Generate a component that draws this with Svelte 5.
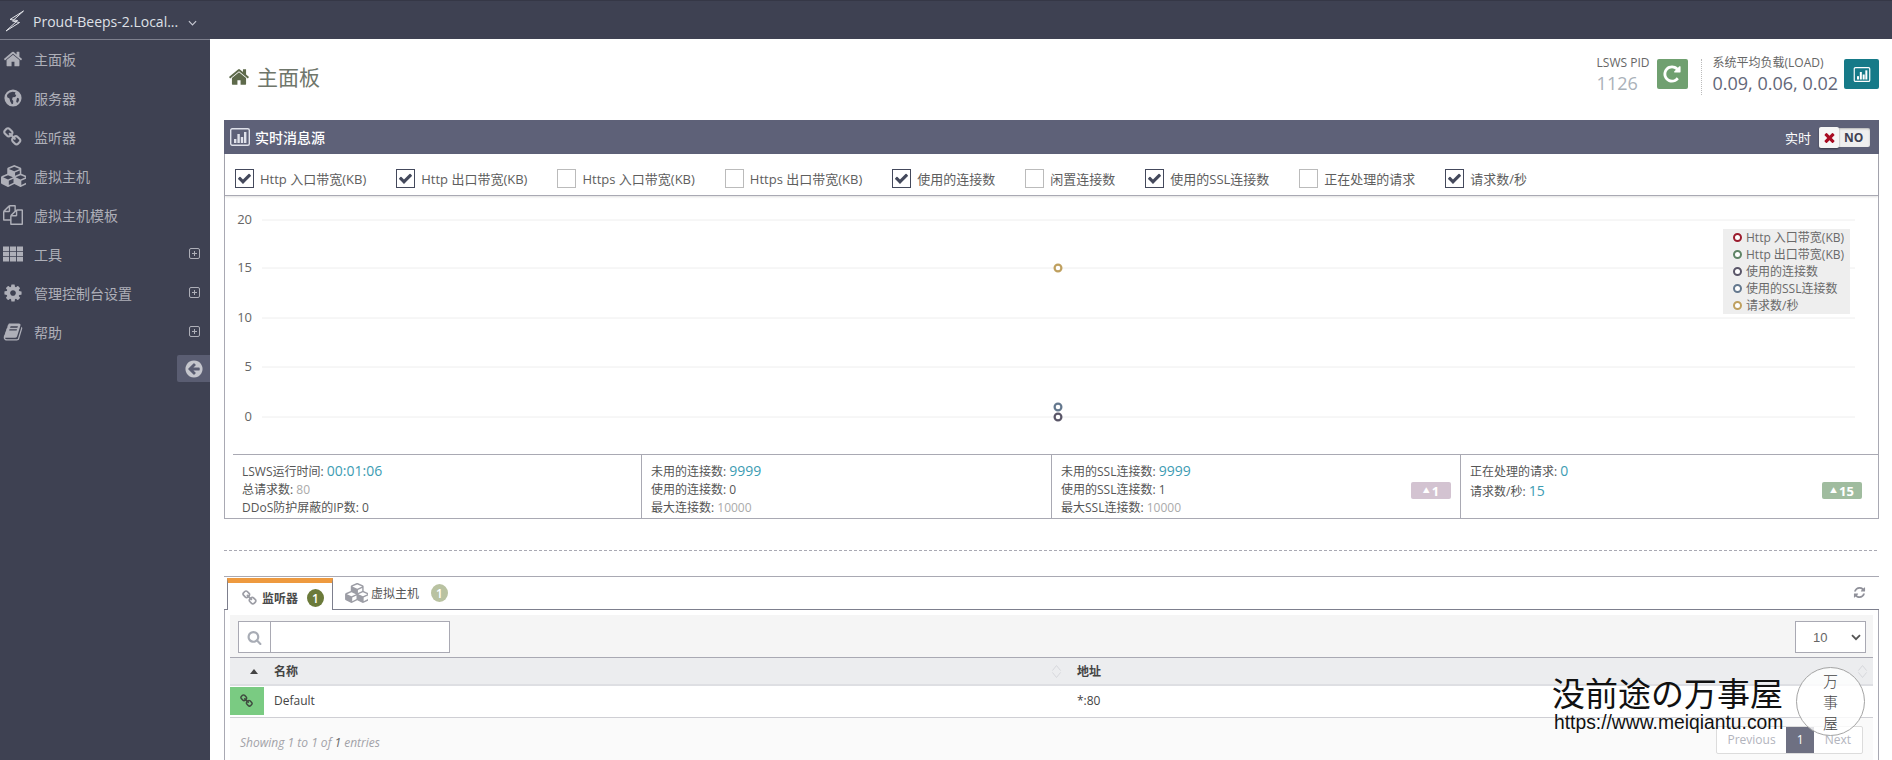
<script>
  const fa = {
    home: 'M1472 992v480q0 26-19 45t-45 19h-384v-384h-256v384h-384q-26 0-45-19t-19-45v-480q0-1 .5-3t.5-3l575-474 575 474q1 2 1 6zm223-69l-62 74q-8 9-21 11h-3q-13 0-21-7l-692-577-692 577q-12 8-24 7-13-2-21-11l-62-74q-8-10-7-23.500t11-21.500l719-599q32-26 76-26t76 26l244 204v-195q0-14 9-23t23-9h192q14 0 23 9t9 23v408l219 182q10 8 11 21.500t-7 23.500z',
    link: 'M1456 1216q0-40-28-68l-208-208q-28-28-68-28-42 0-72 32 3 3 19 18.500t21.500 21.500 15 19 13 25.500 3.500 27.500q0 40-28 68t-68 28q-15 0-27.500-3.500t-25.500-13-19-15-21.500-21.500-18.500-19q-33 31-33 73 0 40 28 68l206 207q27 27 68 27 40 0 68-26l147-146q28-28 28-67zm-703-705q0-40-28-68l-206-207q-28-28-68-28-39 0-68 27l-147 146q-28 28-28 67 0 40 28 68l208 208q27 27 68 27 42 0 72-31-3-3-19-18.500t-21.500-21.500-15-19-13-25.500-3.500-27.500q0-40 28-68t68-28q15 0 27.500 3.500t25.500 13 19 15 21.500 21.500 18.500 19q33-31 33-73zm895 705q0 120-85 203l-147 146q-83 83-203 83-121 0-204-85l-206-207q-83-83-83-203 0-123 88-209l-88-88q-86 88-208 88-120 0-204-84l-208-208q-84-84-84-204t85-203l147-146q83-83 203-83 121 0 204 85l206 207q83 83 83 203 0 123-88 209l88 88q86-88 208-88 120 0 204 84l208 208q84 84 84 204z',
    cog: 'M1152 896q0-106-75-181t-181-75-181 75-75 181 75 181 181 75 181-75 75-181zm512-109v222q0 12-8 23t-20 13l-185 28q-19 54-39 91 35 50 107 138 10 12 10 25t-9 23q-27 37-99 108t-94 71q-12 0-26-9l-138-108q-44 23-91 38-16 136-29 186-7 28-36 28h-222q-14 0-24.500-8.500t-11.500-21.500l-28-184q-49-16-90-37l-141 107q-10 9-25 9-14 0-25-11-126-114-165-168-7-10-7-23 0-12 8-23 15-21 51-66.500t54-70.500q-27-50-41-99l-183-27q-13-2-21-12.500t-8-23.500v-222q0-12 8-23t19-13l186-28q14-46 39-92-40-57-107-138-10-12-10-24 0-10 9-23 26-36 98.500-107.500t94.500-71.500q13 0 26 10l138 107q44-23 91-38 16-136 29-186 7-28 36-28h222q14 0 24.500 8.500t11.500 21.500l28 184q49 16 90 37l142-107q9-9 24-9 13 0 25 10 129 119 165 170 7 8 7 22 0 12-8 23-15 21-51 66.500t-54 70.500q26 50 41 98l183 28q13 2 21 12.500t8 23.500z',
    book: 'M1703 478q40 57 18 129l-275 906q-19 64-76.500 107.500t-122.500 43.500h-923q-77 0-148.500-53.500t-99.500-131.500q-24-67-2-127 0-4 3-27t4-37q1-8-3-21.500t-3-19.500q2-11 8-21t16.500-23.500 16.500-23.500q23-38 45-91.500t30-91.500q3-10 .5-30t-.5-28q3-11 17-28t17-23q21-36 42-92t25-90q1-9-2.500-32t.5-28q4-13 22-30.500t22-22.500q19-26 42.500-84.500t27.500-96.500q1-8-3-25.500t-2-26.500q2-8 9-18t18-23 17-21q8-12 16.500-30.500t15-35 16-36 19.500-32 26.500-23.500 36-11.500 47.500 5.500l-1 3q38-9 51-9h761q74 0 114 56t18 130l-274 906q-36 119-71.500 153.500t-128.500 34.500h-869q-27 0-38 15-11 16-1 43 24 70 144 70h923q29 0 56-15.500t35-41.500l300-987q7-22 5-57 38 15 59 43zm-1064 2q-4 13 2 22.500t20 9.500h608q13 0 25.500-9.500t16.500-22.500l21-64q4-13-2-22.500t-20-9.500h-608q-13 0-25.500 9.500t-16.500 22.500zm-83 256q-4 13 2 22.500t20 9.500h608q13 0 25.500-9.500t16.500-22.500l21-64q4-13-2-22.500t-20-9.500h-608q-13 0-25.500 9.500t-16.500 22.500z',
    files: 'M1696 384q40 0 68 28t28 68v1216q0 40-28 68t-68 28h-960q-40 0-68-28t-28-68v-288h-544q-40 0-68-28t-28-68v-672q0-40 20-88t48-76l408-408q28-28 76-48t88-20h416q40 0 68 28t28 68v328q68-40 128-40h416zm-544 213l-299 299h299v-299zm-640-384l-299 299h299v-299zm196 647l316-316v-416h-384v416q0 40-28 68t-68 28h-416v640h512v-256q0-40 20-88t48-76zm956 804v-1152h-384v416q0 40-28 68t-68 28h-416v640h896z',
    repeat: 'M1664 256v448q0 26-19 45t-45 19h-448q-42 0-59-40-17-39 14-69l138-138q-148-137-349-137-104 0-198.500 40.500t-163.500 109.500-109.500 163.500-40.500 198.500 40.500 198.500 109.500 163.500 163.500 109.500 198.500 40.500q119 0 225-52t179-147q7-10 23-12 15 0 25 9l137 138q9 8 9.500 20.500t-7.500 22.500q-109 132-264 204.500t-327 72.500q-156 0-298-61t-245-164-164-245-61-298 61-298 164-245 245-164 298-61q147 0 284.500 55.500t244.500 156.500l130-129q29-31 70-14 39 17 39 59z',
    back: 'M1408 960v-128q0-26-19-45t-45-19h-502l189-189q19-19 19-45t-19-45l-91-91q-18-18-45-18t-45 18l-362 362-91 91q-18 18-18 45t18 45l91 91 362 362q18 18 45 18t45-18l91-91q18-18 18-45t-18-45l-189-189h502q26 0 45-19t19-45zm256-64q0 209-103 385.500t-279.500 279.500-385.500 103-385.500-103-279.500-279.500-103-385.500 103-385.500 279.500-279.500 385.500-103 385.500 103 279.500 279.500 103 385.500z',
    check: 'M1671 566q0 40-28 68l-724 724-136 136q-28 28-68 28t-68-28l-136-136-362-362q-28-28-28-68t28-68l136-136q28-28 68-28t68 28l294 295 656-657q28-28 68-28t68 28l136 136q28 28 28 68z',
    times: 'M1490 1322q0 40-28 68l-136 136q-28 28-68 28t-68-28l-294-294-294 294q-28 28-68 28t-68-28l-136-136q-28-28-28-68t28-68l294-294-294-294q-28-28-28-68t28-68l136-136q28-28 68-28t68 28l294 294 294-294q28-28 68-28t68 28l136 136q28 28 28 68t-28 68l-294 294 294 294q28 28 28 68z',
    search: 'M1216 832q0-185-131.500-316.500t-316.500-131.500-316.500 131.500-131.500 316.500 131.500 316.500 316.500 131.500 316.500-131.500 131.500-316.500zm512 832q0 52-38 90t-90 38q-54 0-90-38l-343-342q-179 124-399 124-143 0-273.500-55.500t-225-150-150-225-55.500-273.500 55.500-273.500 150-225 225-150 273.500-55.500 273.500 55.500 225 150 150 225 55.500 273.500q0 220-124 399l343 343q37 37 37 90z',
    refresh: 'M1639 1056q0 5-1 7-64 268-268 434.500t-478 166.500q-146 0-282.500-55t-243.500-157l-129 129q-19 19-45 19t-45-19-19-45v-448q0-26 19-45t45-19h448q26 0 45 19t19 45-19 45l-137 137q71 66 161 102t187 36q134 0 250-65t186-179q11-17 53-117 8-23 30-23h192q13 0 22.500 9.500t9.500 22.500zm25-800v448q0 26-19 45t-45 19h-448q-26 0-45-19t-19-45 19-45l138-138q-148-137-349-137-134 0-250 65t-186 179q-11 17-53 117-8 23-30 23h-199q-13 0-22.500-9.500t-9.500-22.500v-7q65-268 270-434.500t480-166.500q146 0 284 55.500t245 156.500l130-129q19-19 45-19t45 19 19 45z',
    th: 'M0 224h544v400h-544zM624 224h544v400h-544zM1248 224h544v400h-544zM0 696h544v400h-544zM624 696h544v400h-544zM1248 696h544v400h-544zM0 1168h544v400h-544zM624 1168h544v400h-544zM1248 1168h544v400h-544z',
    cubes: 'M640 1632l384-192v-314l-384 164v342zm-64-454l404-173-404-173-404 173zm1088 454l384-192v-314l-384 164v342zm-64-454l404-173-404-173-404 173zm-448-293l384-165v-266l-384 164v267zm-64-379l441-189-441-189-441 189zm1088 518v416q0 36-19 67t-52 47l-448 224q-25 14-57 14t-57-14l-448-224q-5-2-7-4-2 2-7 4l-448 224q-25 14-57 14t-57-14l-448-224q-33-16-52-47t-19-67v-416q0-38 21.500-70t56.500-48l434-186v-400q0-38 21.500-70t56.500-48l448-192q23-10 50-10t50 10l448 192q35 16 56.500 48t21.500 70v400l434 186q36 16 57 48t21 70z',
    globe: 'M896 128a768 768 0 1 0 0 1536a768 768 0 1 0 0-1536zM560 420l300-90 260 60-60 170 130 60-90 180-230 30-60 210 110 130-20 240-110 50-150-280-60-240-200-120-20-190zM1260 880l170 50-10 240-150 170-90-120z'
  };

  const menu = [
    { icon: 'home', label: '主面板' },
    { icon: 'globe', label: '服务器' },
    { icon: 'link', label: '监听器' },
    { icon: 'cubes', label: '虚拟主机' },
    { icon: 'files', label: '虚拟主机模板' },
    { icon: 'th', label: '工具', more: true },
    { icon: 'cog', label: '管理控制台设置', more: true },
    { icon: 'book', label: '帮助', more: true }
  ];

  const series = [
    { label: 'Http 入口带宽(KB)', on: true },
    { label: 'Http 出口带宽(KB)', on: true },
    { label: 'Https 入口带宽(KB)', on: false },
    { label: 'Https 出口带宽(KB)', on: false },
    { label: '使用的连接数', on: true },
    { label: '闲置连接数', on: false },
    { label: '使用的SSL连接数', on: true },
    { label: '正在处理的请求', on: false },
    { label: '请求数/秒', on: true }
  ];

  const legend = [
    { label: 'Http 入口带宽(KB)', color: '#9b1c2e' },
    { label: 'Http 出口带宽(KB)', color: '#5f8466' },
    { label: '使用的连接数', color: '#5a5668' },
    { label: '使用的SSL连接数', color: '#64788e' },
    { label: '请求数/秒', color: '#bfa05f' }
  ];

  const ticks = [
    { v: 20, y: 24 },
    { v: 15, y: 72 },
    { v: 10, y: 122 },
    { v: 5, y: 171 },
    { v: 0, y: 221 }
  ];
  const points = [
    { y: 72, color: '#bfa05f' },
    { y: 211, color: '#64788e' },
    { y: 221, color: '#5a5668' }
  ];
</script>

{#snippet icon(name, cls)}
  <svg class={cls} viewBox={name === 'cubes' ? '0 0 2048 1792' : '0 0 1792 1792'} aria-hidden="true"><path d={fa[name]} fill="currentColor" fill-rule="evenodd" /></svg>
{/snippet}

{#snippet bars(cls)}
  <svg class={cls} viewBox="0 0 20 18" aria-hidden="true">
    <rect x="0.7" y="0.7" width="18.6" height="16.6" rx="1.5" fill="none" stroke="currentColor" stroke-width="1.4" />
    <rect x="4" y="11" width="2.4" height="4" fill="currentColor" />
    <rect x="7.4" y="6" width="2.4" height="9" fill="currentColor" />
    <rect x="10.800" y="9" width="2.4" height="6" fill="currentColor" />
    <rect x="14" y="4" width="2.4" height="11" fill="currentColor" />
  </svg>
{/snippet}

{#snippet updown()}
  <svg class="updown" viewBox="0 0 12 16" aria-hidden="true">
    <path d="M1.500 7L6 1.500 10.500 7M1.500 9L6 14.500 10.500 9" fill="none" stroke="#d4d5da" stroke-width="1" />
  </svg>
{/snippet}

<div class="page">
  <header class="topbar">
    <svg class="logo" viewBox="0 0 20 22" aria-hidden="true">
      <path d="M18.500 1L5 9.500 12.500 10.500 1 21 14.500 12.500 7.500 11z" fill="none" stroke="#e4e5ea" stroke-width="1" stroke-linejoin="round" />
    </svg>
    <span class="site">Proud-Beeps-2.Local...</span>
    <svg class="chev" viewBox="0 0 10 6" aria-hidden="true"><path d="M1 1l4 4 4-4" fill="none" stroke="#c6c8d2" stroke-width="1.3" /></svg>
  </header>

  <div class="shell">
    <nav class="sidebar">
      {#each menu as item}
        <div class="nav-item">
          <span class="nav-slot">{@render icon(item.icon, item.icon === 'cubes' ? 'nav-icon cube-icon' : 'nav-icon')}</span>
          <span class="nav-label">{item.label}</span>
          {#if item.more}
            <svg class="plus" viewBox="0 0 11 11" aria-hidden="true">
              <rect x="0.5" y="0.5" width="10" height="10" rx="1.500" fill="none" stroke="currentColor" />
              <path d="M3 5.500h5M5.500 3v5" stroke="currentColor" />
            </svg>
          {/if}
        </div>
      {/each}
      <div class="collapse">{@render icon('back', 'collapse-icon')}</div>
    </nav>

    <main class="content">
      <div class="page-head">
        <h1 class="title">{@render icon('home', 'title-icon')}主面板</h1>
        <div class="head-stats">
          <div class="head-stat">
            <div class="stat-name">LSWS PID</div>
            <div class="stat-num pid">1126</div>
          </div>
          <button class="square green">{@render icon('repeat', 'square-icon')}</button>
          <div class="head-stat load">
            <div class="stat-name">系统平均负载(LOAD)</div>
            <div class="stat-num">0.09, 0.06, 0.02</div>
          </div>
          <button class="square teal">{@render bars('teal-bars')}</button>
        </div>
      </div>

      <section class="panel">
        <div class="panel-head">
          {@render bars('panel-bars')}
          <span class="panel-title">实时消息源</span>
          <span class="live">实时</span>
          <div class="toggle">
            <span class="knob">{@render icon('times', 'x')}</span>
            <span class="no">NO</span>
          </div>
        </div>

        <div class="checks">
          {#each series as s}
            <label class="check">
              <span class="box" class:on={s.on}>
                {#if s.on}{@render icon('check', 'tick')}{/if}
              </span>
              {s.label}
            </label>
          {/each}
        </div>

        <div class="chart">
          <svg class="plot" width="1653" height="258" aria-hidden="true">
            {#each ticks as t}
              <line x1="37" x2="1630" y1={t.y} y2={t.y} stroke="#eeeeee" />
              <text x="27" y={t.y + 4} text-anchor="end">{t.v}</text>
            {/each}
            {#each points as p}
              <circle cx="833" cy={p.y} r="3.400" fill="#fff" stroke={p.color} stroke-width="2.200" />
            {/each}
          </svg>
          <ul class="legend">
            {#each legend as l}
              <li><i style="border-color:{l.color}"></i>{l.label}</li>
            {/each}
          </ul>
        </div>

        <div class="stats">
          <div class="cell">
            <div class="top">LSWS运行时间: <b class="blue">00:01:06</b></div>
            <div>总请求数: <span class="grey">80</span></div>
            <div>DDoS防护屏蔽的IP数: 0</div>
          </div>
          <div class="cell">
            <div class="top">未用的连接数: <b class="blue">9999</b></div>
            <div>使用的连接数: 0</div>
            <div>最大连接数: <span class="grey">10000</span></div>
          </div>
          <div class="cell">
            <div class="top">未用的SSL连接数: <b class="blue">9999</b></div>
            <div>使用的SSL连接数: 1</div>
            <div>最大SSL连接数: <span class="grey">10000</span></div>
            <span class="trend pink">▲<em>1</em></span>
          </div>
          <div class="cell wide">
            <div class="top">正在处理的请求: <b class="blue">0</b></div>
            <div class="top">请求数/秒: <b class="blue">15</b></div>
            <span class="trend sage">▲<em>15</em></span>
          </div>
        </div>
      </section>

      <div class="divider"></div>

      <section class="widget">
        <div class="tabs">
          <div class="tab active">
            {@render icon('link', 'tab-icon')}
            <span class="tab-name">监听器</span>
            <span class="count olive">1</span>
          </div>
          <div class="tab">
            {@render icon('cubes', 'tab-icon big')}
            <span>虚拟主机</span>
            <span class="count pale">1</span>
          </div>
          {@render icon('refresh', 'reload')}
        </div>

        <div class="widget-body">
          <div class="toolbar">
            <div class="search">
              <span class="addon">{@render icon('search', 'search-icon')}</span>
              <span class="field"></span>
            </div>
            <div class="select">
              <span>10</span>
              <svg viewBox="0 0 10 7" aria-hidden="true"><path d="M1 1.200l4 4 4-4" fill="none" stroke="#555" stroke-width="1.800" /></svg>
            </div>
          </div>

          <div class="thead">
            <div class="sort"><span class="asc"></span></div>
            <div class="th">名称 {@render updown()}</div>
            <div class="th">地址 {@render updown()}</div>
          </div>
          <div class="row">
            <div class="status">{@render icon('link', 'status-icon')}</div>
            <div class="td">Default</div>
            <div class="td addr">*:80</div>
          </div>

          <div class="tfoot">
            <span class="showing">Showing 1 to 1 of <b>1</b> entries</span>
            <div class="pager">
              <span class="prev">Previous</span>
              <span class="current">1</span>
              <span>Next</span>
            </div>
          </div>
        </div>
      </section>
    </main>
  </div>

  <div class="watermark">
    <div class="wm-text">
      <div class="wm-title">没前途の万事屋</div>
      <div class="wm-url">https://www.meiqiantu.com</div>
    </div>
    <div class="seal"><span>万</span><span>事</span><span>屋</span></div>
  </div>
</div>

<style>
  :global(body) {
    margin: 0;
    background: #fff;
    overflow: hidden;
  }
  .page {
    position: relative;
    width: 1892px;
    height: 760px;
    overflow: hidden;
    font-family: "Open Sans", "Noto Sans CJK SC", sans-serif;
    font-size: 12px;
    color: #555;
  }
  .topbar {
    height: 38px;
    box-sizing: content-box;
    background: #3e4152;
    border-top: 1px solid #353746;
    display: flex;
    align-items: center;
    color: #dfe0e6;
    font-size: 14px;
  }
  .logo {
    width: 20px;
    height: 22px;
    margin-left: 5px;
    margin-top: 2px;
  }
  .site {
    margin-left: 8px;
    width: 147px;
    white-space: nowrap;
    line-height: 20px;
    margin-top: 3px;
  }
  .chev {
    width: 9px;
    height: 6px;
    margin-left: 8px;
    margin-top: 6px;
  }
  .shell {
    display: flex;
    height: 721px;
  }
  .sidebar {
    width: 210px;
    flex: none;
    background: #3e4152;
    border-top: 1px solid #7d7f8d;
    box-sizing: border-box;
    color: #aeafb8;
    font-size: 14px;
  }
  .nav-item {
    height: 39px;
    display: flex;
    align-items: center;
    position: relative;
    top: -1px;
  }
  .nav-slot {
    width: 26px;
    flex: none;
    display: flex;
    justify-content: center;
    align-items: center;
  }
  .nav-icon {
    width: 20px;
    height: 20px;
  }
  .cube-icon {
    width: 25px;
    height: 22px;
  }
  .nav-label {
    margin-left: 8px;
    flex: 1;
  }
  .plus {
    width: 11px;
    height: 11px;
    margin-right: 10px;
  }
  .collapse {
    width: 33px;
    height: 27px;
    margin: 3px 0 0 auto;
    background: #5a5d72;
    border-radius: 2px 0 0 2px;
    display: flex;
    align-items: center;
    justify-content: center;
    color: #c5c6cd;
  }
  .collapse-icon {
    width: 20px;
    height: 20px;
  }
  .content {
    flex: 1;
    min-width: 0;
    padding: 0 13px 0 14px;
  }
  .page-head {
    height: 81px;
    display: flex;
    justify-content: space-between;
    align-items: flex-start;
  }
  .title {
    margin: 22px 0 0 4px;
    font-size: 21px;
    font-weight: 400;
    color: #6f766b;
    display: flex;
    align-items: center;
    line-height: 32px;
  }
  .title-icon {
    width: 22px;
    height: 22px;
    color: #5e6a4b;
    margin-right: 7px;
  }
  .head-stats {
    display: flex;
    align-items: flex-start;
    margin-top: 15px;
  }
  .stat-name {
    font-size: 12px;
    line-height: 17px;
    color: #666;
  }
  .stat-num {
    font-size: 18px;
    line-height: 24px;
    color: #636779;
  }
  .pid {
    color: #aab1b9;
  }
  .square {
    width: 31px;
    height: 30px;
    padding: 0;
    border: none;
    border-radius: 2px;
    margin-top: 5px;
    margin-left: 7px;
    color: #fff;
    display: flex;
    align-items: center;
    justify-content: center;
  }
  .green {
    background: #70a070;
  }
  .teal {
    background: #167a88;
    width: 35px;
    margin-left: 6px;
  }
  .square-icon {
    width: 20px;
    height: 20px;
  }
  .teal-bars {
    width: 18px;
    height: 15px;
  }
  .load {
    margin-left: 13px;
    border-left: 1px dotted #bbb;
    padding-left: 11px;
    height: 36px;
    margin-top: 5px;
  }
  .load .stat-name {
    margin-top: -5px;
  }
  .panel {
    border: 1px solid #a9a9b3;
    border-top: none;
    box-sizing: border-box;
    height: 399px;
  }
  .panel-head {
    height: 34px;
    margin: 0 -1px;
    background: #5e6178;
    color: #fff;
    display: flex;
    align-items: center;
    padding-left: 6px;
    padding-right: 9px;
    font-weight: 500;
    font-size: 14px;
  }
  .panel-bars {
    width: 20px;
    height: 18px;
    color: #dfe1ea;
    margin-right: 5px;
  }
  .panel-title {
    flex: 1;
  }
  .live {
    font-weight: 400;
    font-size: 13px;
    margin-right: 8px;
  }
  .toggle {
    width: 51px;
    height: 19px;
    background: #efefef;
    border-radius: 2px;
    box-shadow: inset 0 1px 2px rgba(0, 0, 0, 0.25);
    display: flex;
    align-items: center;
    color: #3e4152;
    font-size: 12px;
    font-weight: 700;
  }
  .knob {
    width: 20px;
    height: 21px;
    background: #f6f6f6;
    border-radius: 2px;
    box-shadow: 0 1px 2px rgba(0, 0, 0, 0.4);
    display: flex;
    align-items: center;
    justify-content: center;
    color: #a80c22;
    flex: none;
  }
  .x {
    width: 15px;
    height: 15px;
  }
  .no {
    margin-left: 5px;
  }
  .checks {
    height: 42px;
    box-sizing: border-box;
    padding: 7px 0 0 10px;
    display: flex;
    align-items: center;
    gap: 30px;
    border-bottom: 1px solid #a9a9b3;
    box-shadow: 0 1px 2px rgba(0, 0, 0, 0.12);
    font-size: 13px;
    color: #5e5e5e;
  }
  .check {
    display: flex;
    align-items: center;
    gap: 6px;
    white-space: nowrap;
  }
  .box {
    width: 17px;
    height: 17px;
    border: 1px solid #bbb;
    display: flex;
    align-items: center;
    justify-content: center;
    color: #44495c;
  }
  .box.on {
    border-color: #44495c;
  }
  .tick {
    width: 15px;
    height: 15px;
  }
  .chart {
    height: 258px;
    position: relative;
  }
  .plot {
    display: block;
    font-size: 13px;
  }
  .plot text {
    fill: #666;
  }
  .legend {
    position: absolute;
    left: 1498px;
    top: 33px;
    width: 127px;
    height: 85px;
    margin: 0;
    padding: 0;
    list-style: none;
    background: #eeeeee;
    font-size: 12px;
    line-height: 17px;
    color: #6a6a6a;
  }
  .legend li {
    display: flex;
    align-items: center;
    white-space: nowrap;
  }
  .legend i {
    width: 5px;
    height: 5px;
    border: 2px solid;
    border-radius: 50%;
    margin: 0 4px 0 10px;
    background: #fff;
    flex: none;
  }
  .stats {
    height: 64px;
    margin-left: 8px;
    border-top: 1px solid #a9a9b3;
    display: grid;
    grid-template-columns: 408px 410px 409px 1fr;
    color: #555;
    line-height: 18px;
  }
  .cell {
    padding: 8px 10px 0 9px;
    border-left: 1px solid #a9a9b3;
    position: relative;
    white-space: nowrap;
  }
  .cell:first-child {
    border-left: none;
  }
  .top {
    height: 18px;
  }
  .cell.wide {
    padding-top: 7px;
  }
  .wide .top {
    height: 20px;
    line-height: 20px;
  }
  .blue {
    font-size: 14px;
    font-weight: 400;
    line-height: 1;
    color: #3d9cb3;
  }
  .grey {
    color: #aaa;
  }
  .trend {
    position: absolute;
    top: 27px;
    height: 17px;
    width: 40px;
    border-radius: 2px;
    color: #fff;
    font-size: 7px;
    display: flex;
    align-items: center;
    justify-content: center;
    gap: 2px;
  }
  .trend em {
    font-size: 13px;
    font-weight: 700;
    font-style: normal;
  }
  .pink {
    background: #d3c3d1;
    right: 9px;
  }
  .sage {
    background: #a0bc9f;
    right: 16px;
  }
  .divider {
    height: 1px;
    margin: 31px 0 25px;
    background: repeating-linear-gradient(90deg, #a9a9b3 0 3px, transparent 3px 5px);
  }
  .widget {
    border-top: 1px solid #a9a9b3;
  }
  .tabs {
    height: 32px;
    border-bottom: 1px solid #7d7f8d;
    display: flex;
    align-items: flex-start;
    padding-left: 3px;
  }
  .tab {
    display: flex;
    align-items: center;
    height: 32px;
    padding: 0 10px 0 12px;
    box-sizing: border-box;
    color: #555;
    font-size: 12px;
    gap: 3px;
  }
  .tab.active {
    width: 106px;
    margin-top: 1px;
    height: 32px;
    padding: 3px 0 0 14px;
    background: #fff;
    border-top: 5px solid #ee9a3f;
    border-left: 1px solid #7d7f8d;
    border-right: 1px solid #7d7f8d;
    gap: 4px;
    font-weight: 600;
    color: #4a4a4a;
  }
  .tab-name {
    width: 36px;
  }
  .tab-icon {
    width: 16px;
    height: 16px;
    color: #9c9da5;
  }
  .tab-icon.big {
    width: 23px;
    height: 20px;
  }
  .count {
    width: 17px;
    height: 18px;
    border-radius: 50%;
    color: #fff;
    font-size: 12px;
    font-weight: 600;
    display: flex;
    align-items: center;
    justify-content: center;
    margin-left: 5px;
  }
  .olive {
    background: #6b7a3a;
  }
  .pale {
    background: #b9c2a1;
    margin-left: 9px;
  }
  .reload {
    width: 13px;
    height: 13px;
    color: #8f9099;
    margin: 9px 13px 0 auto;
  }
  .widget-body {
    border-left: 1px solid #a9a9b3;
    border-right: 1px solid #a9a9b3;
    padding: 5px 5px 0;
    height: 145px;
  }
  .toolbar {
    height: 42px;
    background: #f5f5f5;
    display: flex;
    justify-content: space-between;
    align-items: flex-start;
    padding: 6px 7px 0 8px;
    box-sizing: border-box;
  }
  .search {
    display: flex;
    width: 212px;
    height: 32px;
    box-sizing: border-box;
    border: 1px solid #a9a9b3;
    background: #fff;
  }
  .addon {
    width: 32px;
    box-sizing: border-box;
    border-right: 1px solid #a9a9b3;
    display: flex;
    align-items: center;
    justify-content: center;
    color: #a8acb5;
  }
  .search-icon {
    width: 15px;
    height: 15px;
  }
  .select {
    width: 71px;
    height: 32px;
    box-sizing: border-box;
    border: 1px solid #a9a9b3;
    background: #fff;
    display: flex;
    align-items: center;
    justify-content: space-between;
    padding: 0 4px 0 17px;
    font-size: 13px;
    font-family: "Liberation Sans", sans-serif;
    color: #666;
  }
  .select svg {
    width: 10px;
    height: 7px;
  }
  .thead,
  .row {
    display: grid;
    grid-template-columns: 34px 803px 1fr;
    align-items: center;
  }
  .thead {
    height: 29px;
    box-sizing: border-box;
    background: #ecedef;
    border-top: 1px solid #a9a9b3;
    border-bottom: 2px solid #dedfe3;
    font-weight: 700;
    color: #444;
  }
  .sort {
    display: flex;
    justify-content: center;
    padding-left: 14px;
  }
  .asc {
    width: 0;
    height: 0;
    border: 4.500px solid transparent;
    border-bottom: 5px solid #444;
    border-top: none;
  }
  .th {
    display: flex;
    justify-content: space-between;
    align-items: center;
    padding: 0 5px 0 10px;
  }
  .updown {
    width: 11px;
    height: 15px;
  }
  .row {
    height: 32px;
    background: #fff;
    border-bottom: 1px solid #cfcfd4;
    box-sizing: border-box;
    align-items: start;
    font-size: 12px;
    color: #444;
  }
  .status {
    height: 28px;
    background: #7acb82;
    margin-top: 1px;
    display: flex;
    align-items: center;
    justify-content: center;
    color: #3f4a3f;
  }
  .status-icon {
    width: 14px;
    height: 14px;
  }
  .td {
    line-height: 30px;
    padding-left: 10px;
  }
  .tfoot {
    height: 42px;
    background: #fafafa;
    display: flex;
    justify-content: space-between;
    padding: 8px 10px 0 10px;
  }
  .showing {
    font-style: italic;
    color: #a2a2a8;
    line-height: 28px;
    margin-top: 3px;
  }
  .showing b {
    color: #666;
    font-weight: 400;
  }
  .pager {
    display: flex;
    height: 28px;
    box-sizing: border-box;
    border: 1px solid #dcdcdc;
    border-radius: 2px;
    background: #fff;
    color: #b2b4bd;
    line-height: 26px;
  }
  .pager span {
    padding: 0 11px;
  }
  .pager .prev {
    padding: 0 10px;
  }
  .pager .current {
    padding: 0 11px;
    background: #6e7082;
    color: #fff;
    width: 28px;
    box-sizing: border-box;
    text-align: center;
  }
  .watermark {
    position: absolute;
    left: 1552px;
    top: 667px;
    display: flex;
    align-items: center;
    pointer-events: none;
  }
  .wm-text {
    width: 244px;
    color: #111;
  }
  .wm-title {
    font-size: 33px;
    line-height: 42px;
    font-family: "Noto Sans CJK SC", sans-serif;
    font-weight: 400;
    white-space: nowrap;
  }
  .wm-url {
    font-family: "Liberation Sans", sans-serif;
    font-size: 19.300px;
    line-height: 20px;
    white-space: nowrap;
    margin-left: 2px;
  }
  .seal {
    width: 69px;
    height: 69px;
    box-sizing: border-box;
    border: 1.500px solid #a4a4a4;
    border-radius: 50%;
    background: rgba(255, 255, 255, 0.8);
    display: flex;
    flex-direction: column;
    align-items: center;
    justify-content: center;
    font-size: 15px;
    line-height: 21px;
    font-weight: 300;
    color: #444;
    font-family: "Noto Sans CJK SC", sans-serif;
  }
</style>
